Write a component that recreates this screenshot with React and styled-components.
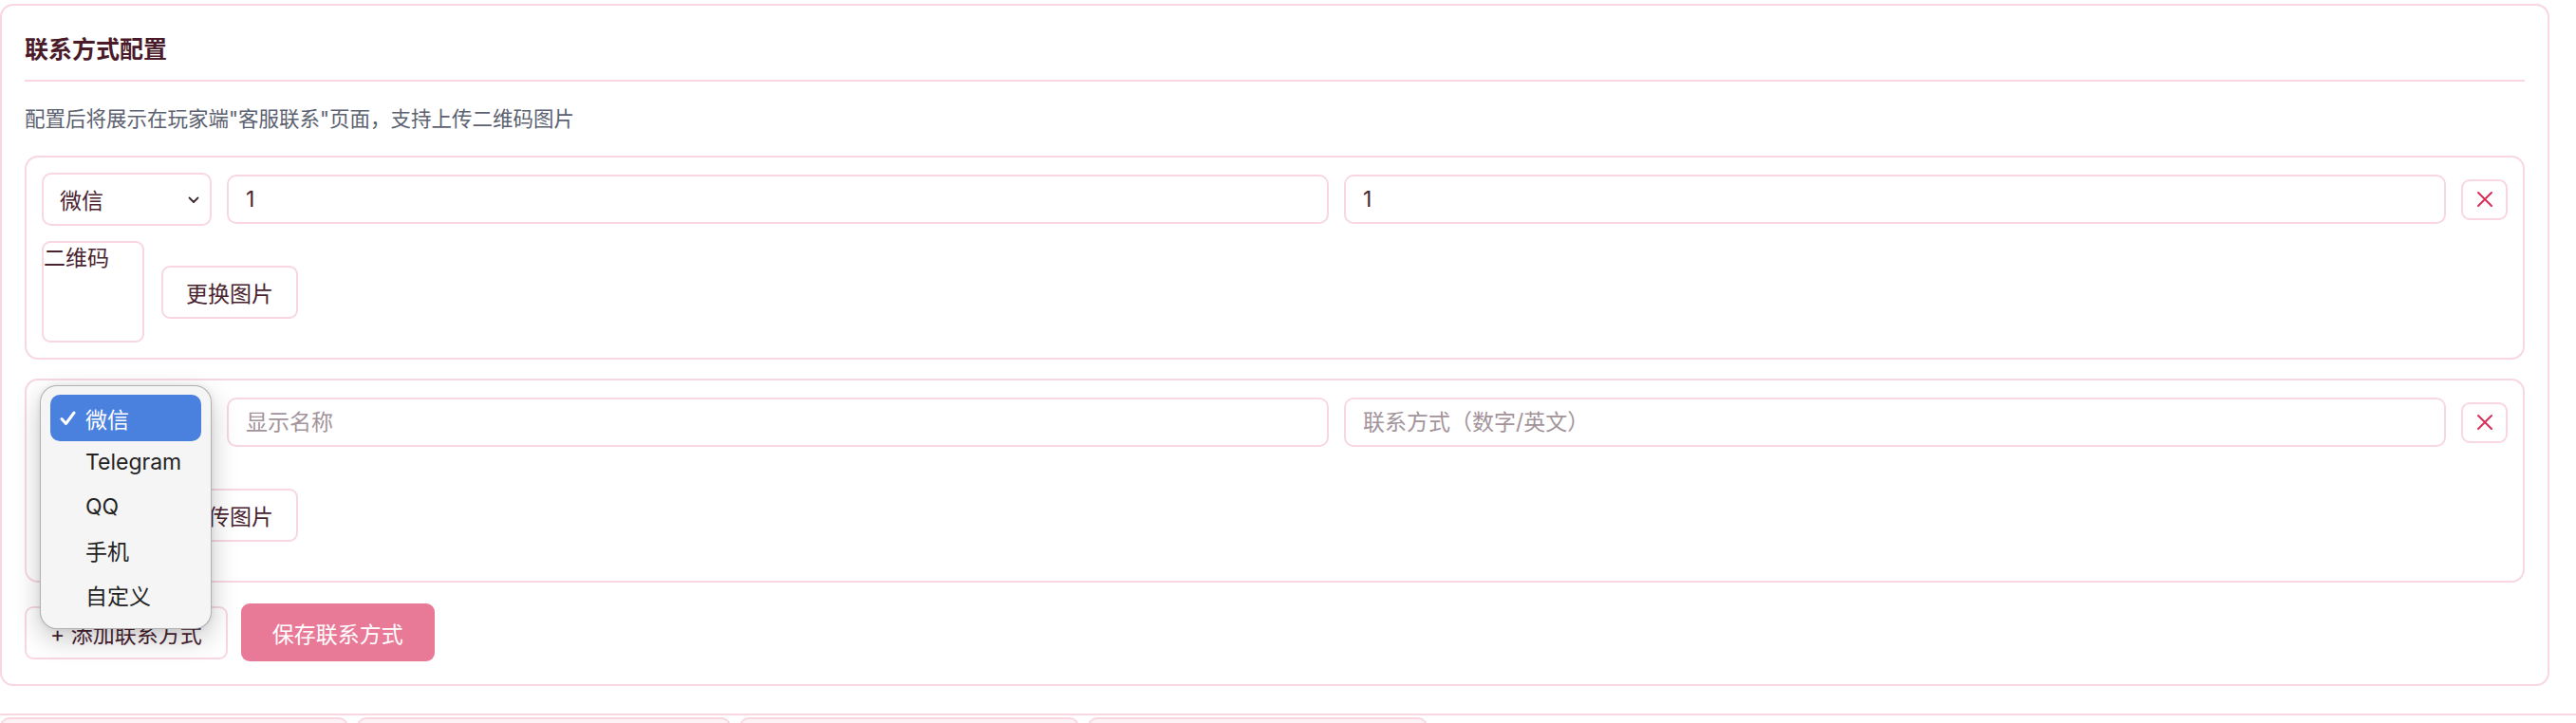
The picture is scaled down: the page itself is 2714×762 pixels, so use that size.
import styled, { createGlobalStyle } from "styled-components";

const GlobalStyle = createGlobalStyle`
  html, body {
    margin: 0;
    padding: 0;
    background: #ffffff;
  }
  body {
    font-family: "Inter", "Noto Sans CJK SC", sans-serif;
    color: #4a2330;
  }
  * {
    box-sizing: border-box;
  }
`;

const PINK_LINE = "#f8d7e1";

const contacts = [
  { type: "微信", name: "1", account: "1", image: "二维码" },
  { type: "微信", name: "", account: "", image: null, open: true },
];

const options = ["微信", "Telegram", "QQ", "手机", "自定义"];

const tabs = [367, 394, 358, 358];

const ChevronDown = () => (
  <svg width="14" height="9" viewBox="0 0 14 9" fill="none">
    <path d="M2.5 2.5l4.5 4.5 4.5-4.5" stroke="#3a2a30" strokeWidth="1.8" strokeLinecap="round" strokeLinejoin="round" />
  </svg>
);

const CrossIcon = () => (
  <svg width="18" height="18" viewBox="0 0 18 18" fill="none">
    <path d="M2 2l14 14M16 2L2 16" stroke="#d92f56" strokeWidth="2" strokeLinecap="round" />
  </svg>
);

const CheckIcon = () => (
  <svg width="17" height="16" viewBox="0 0 17 16" fill="none">
    <path d="M2 8.5l4.5 5L15 2" stroke="#ffffff" strokeWidth="3" strokeLinecap="round" strokeLinejoin="round" />
  </svg>
);

const OptionMenu = ({ selected }) => (
  <Menu>
    {options.map((opt) => (
      <MenuItem key={opt} $active={opt === selected}>
        <CheckSlot>{opt === selected ? <CheckIcon /> : null}</CheckSlot>
        {opt}
      </MenuItem>
    ))}
  </Menu>
);

const ContactItem = ({ item }) => (
  <ItemCard>
    <FieldRow>
      <SelectWrap>
        <SelectBox $covered={item.open}>
          <span>{item.type}</span>
          <ChevronDown />
        </SelectBox>
        {item.open ? <OptionMenu selected={item.type} /> : null}
      </SelectWrap>
      <TextInput defaultValue={item.name} placeholder="显示名称" />
      <TextInput defaultValue={item.account} placeholder="联系方式（数字/英文）" />
      <RemoveButton>
        <CrossIcon />
      </RemoveButton>
    </FieldRow>
    <ImageRow>
      <Thumb>{item.image}</Thumb>
      <GhostButton>{item.image ? "更换图片" : "上传图片"}</GhostButton>
    </ImageRow>
  </ItemCard>
);

export default function App() {
  return (
    <>
      <GlobalStyle />
      <Page>
        <Card>
          <Header>
            <Title>联系方式配置</Title>
          </Header>
          <Hint>配置后将展示在玩家端"客服联系"页面，支持上传二维码图片</Hint>
          <ItemList>
            {contacts.map((c, i) => (
              <ContactItem key={i} item={c} />
            ))}
          </ItemList>
          <Actions>
            <GhostButton $wide>+ 添加联系方式</GhostButton>
            <PrimaryButton>保存联系方式</PrimaryButton>
          </Actions>
        </Card>
        <TabBar>
          {tabs.map((w, i) => (
            <Tab key={i} style={{ width: w }} />
          ))}
        </TabBar>
      </Page>
    </>
  );
}

const Page = styled.div`
  width: 2714px;
  padding-top: 4px;
`;

const Card = styled.section`
  margin-right: 28px;
  border: 2px solid ${PINK_LINE};
  border-radius: 14px;
  padding: 0 24px 24px 24px;
  background: #ffffff;
`;

const Header = styled.div`
  padding: 28px 0 14px 0;
  border-bottom: 2px solid ${PINK_LINE};
`;

const Title = styled.h2`
  margin: 0;
  font-size: 25px;
  line-height: 36px;
  font-weight: 700;
  color: #4a1a29;
`;

const Hint = styled.p`
  margin: 23px 0 0 0;
  font-size: 21.5px;
  line-height: 32px;
  color: #5b6170;
`;

const ItemList = styled.div`
  margin-top: 23px;
  display: flex;
  flex-direction: column;
  gap: 20px;
`;

const ItemCard = styled.div`
  border: 2px solid ${PINK_LINE};
  border-radius: 14px;
  padding: 16px;
  display: flex;
  flex-direction: column;
  gap: 16px;
`;

const FieldRow = styled.div`
  display: flex;
  align-items: center;
  gap: 16px;
  height: 56px;
`;

const SelectWrap = styled.div`
  position: relative;
  flex: 0 0 179px;
`;

const SelectBox = styled.div`
  height: 56px;
  border: 2px solid ${PINK_LINE};
  border-radius: 10px;
  padding: 0 10px 0 17px;
  display: flex;
  align-items: center;
  justify-content: space-between;
  font-size: 23px;
  color: #4a2330;
  background: #ffffff;

  & > * {
    visibility: ${(p) => (p.$covered ? "hidden" : "visible")};
  }
`;

const TextInput = styled.input`
  flex: 1 1 0;
  min-width: 0;
  height: 52px;
  border: 2px solid ${PINK_LINE};
  border-radius: 10px;
  padding: 0 18px;
  font-family: inherit;
  font-size: 23px;
  color: #4a2330;
  background: #ffffff;
  outline: none;

  &::placeholder {
    color: #a3939a;
  }
`;

const RemoveButton = styled.button`
  flex: 0 0 49px;
  height: 43px;
  border: 2px solid ${PINK_LINE};
  border-radius: 9px;
  background: #ffffff;
  display: flex;
  align-items: center;
  justify-content: center;
  padding: 0;
`;

const ImageRow = styled.div`
  display: flex;
  align-items: center;
  gap: 18px;
`;

const Thumb = styled.div`
  width: 108px;
  height: 107px;
  border: 2px solid ${PINK_LINE};
  border-radius: 9px;
  font-size: 23px;
  line-height: 32px;
  color: #4a2330;
  overflow: hidden;
`;

const GhostButton = styled.button`
  height: 56px;
  padding: 0 ${(p) => (p.$wide ? "25px" : "24px")};
  border: 2px solid ${PINK_LINE};
  border-radius: 9px;
  background: #ffffff;
  font-family: inherit;
  font-size: 23px;
  color: #4a2330;
  white-space: nowrap;
`;

const PrimaryButton = styled.button`
  height: 61px;
  padding: 0 33px;
  border: none;
  border-radius: 9px;
  background: #e87a98;
  font-family: inherit;
  font-size: 23px;
  color: #ffffff;
  white-space: nowrap;
`;

const Actions = styled.div`
  margin-top: 22px;
  display: flex;
  align-items: center;
  gap: 14px;
`;

const Menu = styled.div`
  position: absolute;
  left: -2px;
  top: -11px;
  width: 181px;
  padding: 9px 10px 12px 10px;
  border: 1px solid rgba(0, 0, 0, 0.28);
  border-radius: 18px;
  background: #f5f5f5;
  box-shadow: 0 10px 28px rgba(0, 0, 0, 0.22), 0 0 6px rgba(0, 0, 0, 0.08);
  z-index: 10;
`;

const MenuItem = styled.div`
  height: ${(p) => (p.$active ? "49px" : "46.5px")};
  margin-bottom: ${(p) => (p.$active ? "-1px" : "0")};
  display: flex;
  align-items: center;
  border-radius: 10px;
  font-size: 23px;
  color: ${(p) => (p.$active ? "#ffffff" : "#232323")};
  background: ${(p) => (p.$active ? "#4a81df" : "transparent")};
`;

const CheckSlot = styled.span`
  width: 37px;
  padding-left: 10px;
  display: flex;
  align-items: center;
`;

const TabBar = styled.div`
  margin-top: 29px;
  border-top: 2px solid ${PINK_LINE};
  padding-top: 2px;
  display: flex;
  gap: 9px;
`;

const Tab = styled.div`
  height: 40px;
  border: 2px solid ${PINK_LINE};
  border-bottom: none;
  border-radius: 10px 10px 0 0;
  background: #fdf3f6;
`;
